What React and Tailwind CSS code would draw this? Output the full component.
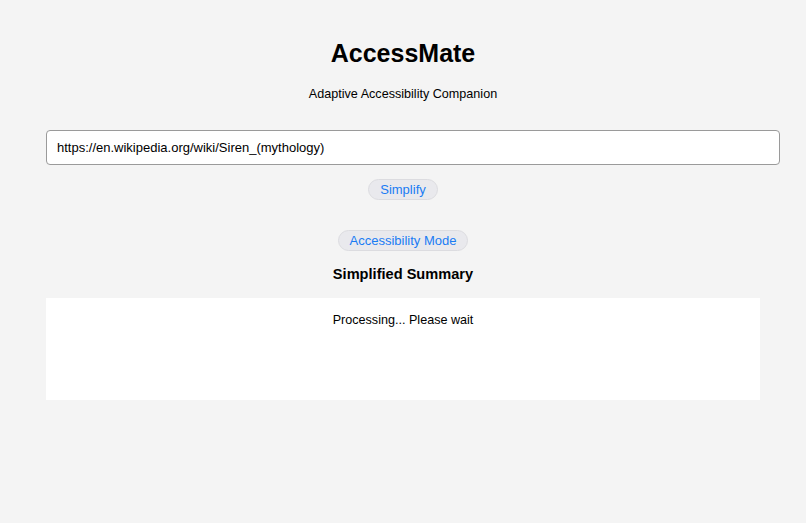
import React, { useState } from 'react';

const App = () => {
  const [url, setUrl] = useState('https://en.wikipedia.org/wiki/Siren_(mythology)');

  return (
    <div className="min-h-[523px] w-full bg-[#f4f4f4] font-['Liberation_Sans',Arial,sans-serif] text-black">
      <div className="flex flex-col items-center px-[46px] pt-[38px]">
        <h1 className="text-[25px] leading-[30px] font-bold">AccessMate</h1>
        <p className="mt-[18px] text-[12.6px] leading-[16px]">Adaptive Accessibility Companion</p>

        {/* URL input */}
        <div className="mt-[28px] w-full">
          <input
            type="text"
            value={url}
            onChange={(e) => setUrl(e.target.value)}
            className="block h-[35px] w-[734px] rounded-[4px] border border-[#9a9a9a] bg-white px-[10px] text-[13px] outline-none"
          />
        </div>

        <button
          type="button"
          className="mt-[14px] h-[21px] rounded-full border border-[#dcdce0] bg-[#e9e9ed] px-[11px] text-[13px] leading-[19px] text-[#1a7cf4]"
        >
          Simplify
        </button>

        <button
          type="button"
          className="mt-[30px] h-[21px] rounded-full border border-[#dcdce0] bg-[#e9e9ed] px-[11px] text-[13px] leading-[19px] text-[#1a7cf4]"
        >
          Accessibility Mode
        </button>

        <h2 className="mt-[14px] text-[14.6px] leading-[18px] font-bold">Simplified Summary</h2>

        {/* Summary output */}
        <div className="mt-[15px] h-[102px] w-full bg-white pt-[14px] text-center text-[12.6px] leading-[16px]">
          Processing... Please wait
        </div>
      </div>
    </div>
  );
};

export default App;
